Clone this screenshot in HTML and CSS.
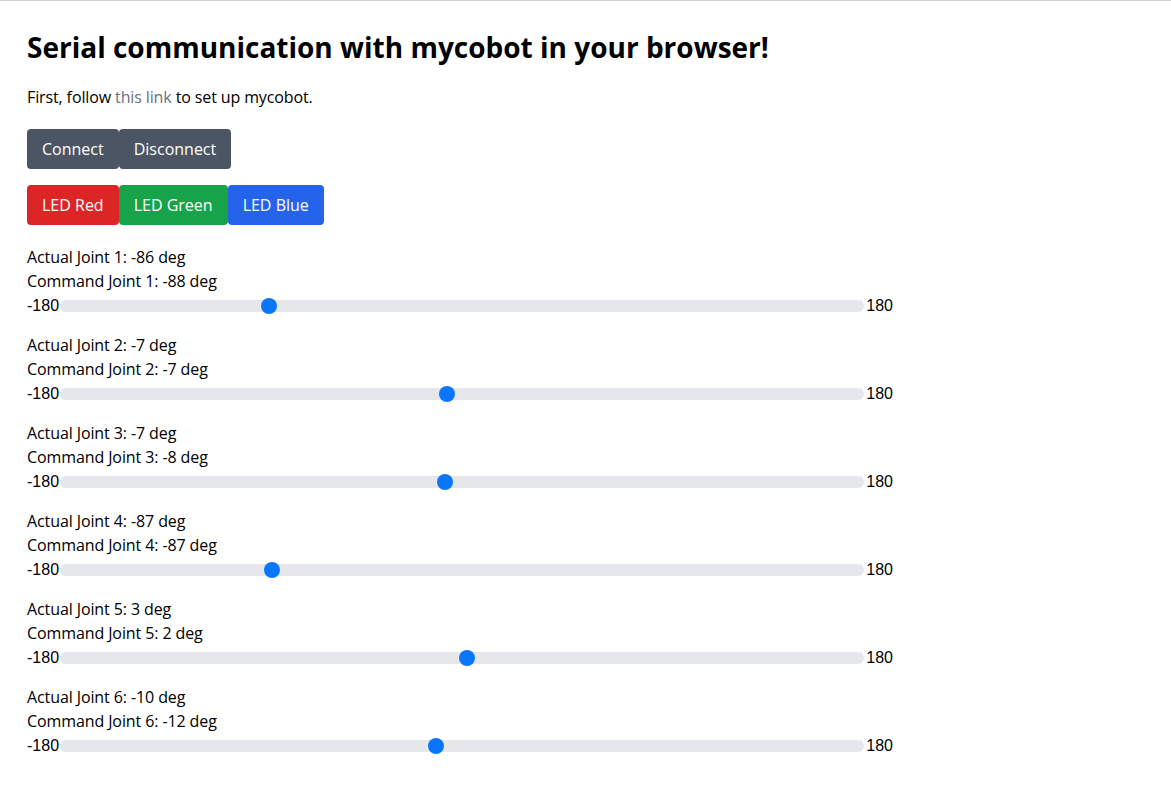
FILE: index.html
```html
<!DOCTYPE html>
<html>
<head>
<meta charset="utf-8">
<link rel="stylesheet" href="styles.css">
</head>
<body>
<main class="page">
  <h1 class="title">Serial communication with mycobot in your browser!</h1>
  <p class="intro">First, follow <a class="link" href="#">this link</a> to set up mycobot.</p>
  <div class="btn-row">
    <button class="btn btn-gray">Connect</button>
    <button class="btn btn-gray">Disconnect</button>
  </div>
  <div class="btn-row">
    <button class="btn btn-red">LED Red</button>
    <button class="btn btn-green">LED Green</button>
    <button class="btn btn-blue">LED Blue</button>
  </div>
  <section class="joints">
    <div class="joint">
      <div class="line">Actual Joint 1: -86 deg</div>
      <div class="line">Command Joint 1: -88 deg</div>
      <div class="slider-row"><span class="bound">-180</span><input class="slider" type="range" min="-180" max="180" value="-88"><span class="bound">180</span></div>
    </div>
    <div class="joint">
      <div class="line">Actual Joint 2: -7 deg</div>
      <div class="line">Command Joint 2: -7 deg</div>
      <div class="slider-row"><span class="bound">-180</span><input class="slider" type="range" min="-180" max="180" value="-7"><span class="bound">180</span></div>
    </div>
    <div class="joint">
      <div class="line">Actual Joint 3: -7 deg</div>
      <div class="line">Command Joint 3: -8 deg</div>
      <div class="slider-row"><span class="bound">-180</span><input class="slider" type="range" min="-180" max="180" value="-8"><span class="bound">180</span></div>
    </div>
    <div class="joint">
      <div class="line">Actual Joint 4: -87 deg</div>
      <div class="line">Command Joint 4: -87 deg</div>
      <div class="slider-row"><span class="bound">-180</span><input class="slider" type="range" min="-180" max="180" value="-87"><span class="bound">180</span></div>
    </div>
    <div class="joint">
      <div class="line">Actual Joint 5: 3 deg</div>
      <div class="line">Command Joint 5: 2 deg</div>
      <div class="slider-row"><span class="bound">-180</span><input class="slider" type="range" min="-180" max="180" value="2"><span class="bound">180</span></div>
    </div>
    <div class="joint">
      <div class="line">Actual Joint 6: -10 deg</div>
      <div class="line">Command Joint 6: -12 deg</div>
      <div class="slider-row"><span class="bound">-180</span><input class="slider" type="range" min="-180" max="180" value="-12"><span class="bound">180</span></div>
    </div>
  </section>
</main>
</body>
</html>
```
FILE: styles.css
```css
html, body {
  margin: 0;
  padding: 0;
  background: #ffffff;
}
body {
  border-top: 1px solid #cfcfcf;
  font-family: "Open Sans", "Noto Sans", sans-serif;
  color: #000;
  font-size: 16px;
  line-height: 24px;
}
.page {
  padding: 28px 27px 40px 27px;
}
.title {
  margin: 0;
  font-size: 28px;
  line-height: 36px;
  font-weight: 700;
}
.intro {
  margin: 20px 0 0 0;
  letter-spacing: -0.12px;
}
.link {
  color: #6b7280;
  text-decoration: none;
}
.btn-row {
  display: flex;
  margin-top: 20px;
}
.btn-row + .btn-row {
  margin-top: 16px;
}
.btn {
  font-family: inherit;
  font-size: 16px;
  line-height: 24px;
  color: #fff;
  border: none;
  border-radius: 4px;
  padding: 8px 15px;
  margin: 0;
}
.btn-gray { background: #4b5563; }
.btn-red { background: #dc2626; }
.btn-green { background: #16a34a; }
.btn-blue { background: #2563eb; }
.joints {
  margin-top: 20px;
  display: flex;
  flex-direction: column;
  gap: 15px;
}
.line {
  letter-spacing: -0.1px;
}
.slider-row {
  display: flex;
  align-items: center;
  width: 866px;
  height: 24px;
  padding-top: 1px;
}
.bound {
  font-family: "Liberation Sans", Arial, sans-serif;
  font-size: 16px;
}
.slider {
  -webkit-appearance: none;
  appearance: none;
  flex: 1;
  margin: 0 2px 0 1px;
  height: 12px;
  border-radius: 6px;
  background: #e5e7eb;
  outline: none;
}
.slider::-webkit-slider-thumb {
  -webkit-appearance: none;
  appearance: none;
  width: 16px;
  height: 16px;
  border-radius: 50%;
  background: #0a75ff;
  border: none;
}
```
